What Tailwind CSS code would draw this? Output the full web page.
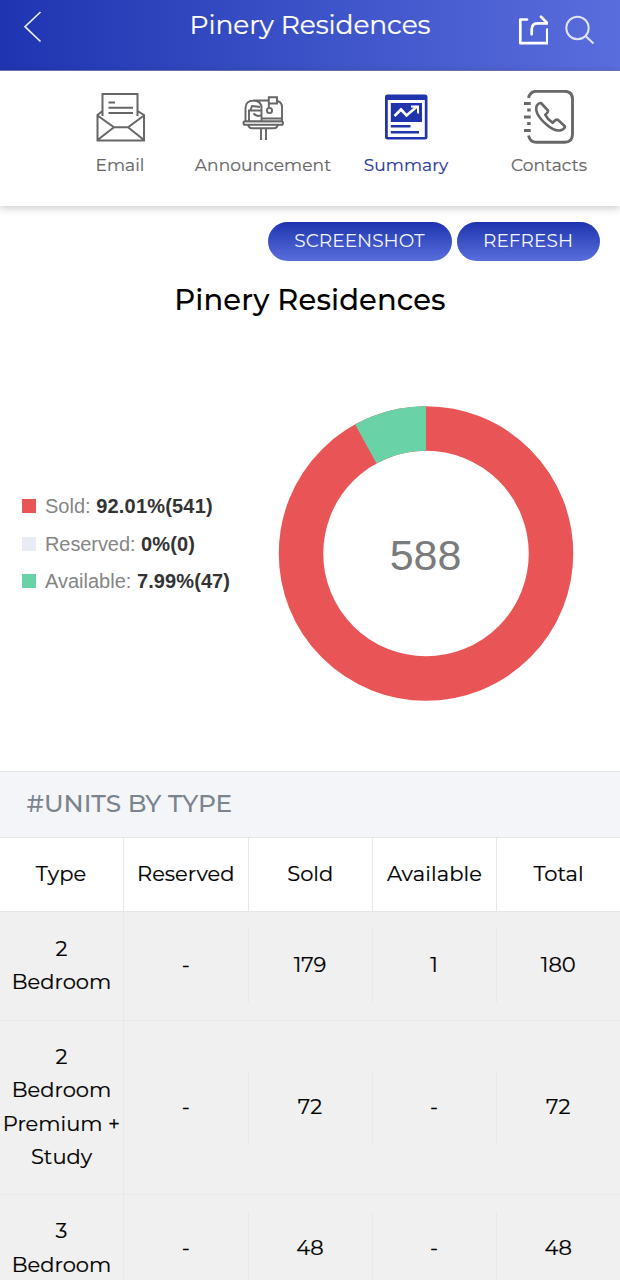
<!DOCTYPE html>
<html lang="en">
<head>
<meta charset="utf-8">
<title>Pinery Residences</title>
<script src="https://cdn.jsdelivr.net/npm/@tailwindcss/browser@4"></script>
</head>
<body class="w-[620px] h-[1280px] overflow-hidden bg-white font-[Montserrat,Inter,sans-serif] text-black">
<div class="flex flex-col h-[1280px] overflow-hidden">

  <header class="h-[71px] shrink-0 grid grid-cols-[189px_242px_189px] bg-linear-to-r from-[#1f34b1] to-[#5a6ddd] border-b border-[#7078b4] text-white">
    <div class="pl-[23px] pt-[11px]">
      <svg class="w-[20px] h-[32px]" viewBox="0 0 20 32" fill="none" stroke="#e9ecff" stroke-width="1.7"><path d="M17.5 1 2 15.7 17.5 30.5"/></svg>
    </div>
    <h1 class="pt-[5px] text-[26.500px] leading-[40px] text-center whitespace-nowrap tracking-[-0.1px] [-webkit-text-stroke:0.2px]">Pinery Residences</h1>
    <div class="flex pt-[14px] pl-[85px] gap-[16px]">
      <svg class="w-[32px] h-[32px]" viewBox="0 0 32 32" fill="none" stroke="#fff" stroke-width="2.7" stroke-linejoin="round" stroke-linecap="round"><path d="M11 5.500H4.300v23.700h27V15.500"/><path d="M16.200 20.500V16Q16.200 9.500 22 9.500H32M25.500 3l6.500 6.500" transform="translate(-.5 -.2)"/></svg>
      <svg class="w-[32px] h-[32px]" viewBox="0 0 32 32" fill="none" stroke="#dfe3fb" stroke-width="2"><circle cx="13.500" cy="14" r="11.200"/><path d="m21.500 22 8 7.500"/></svg>
    </div>
  </header>

  <nav class="relative z-10 h-[135px] shrink-0 pl-[48px] grid grid-cols-4 bg-white shadow-[0_2px_8px_rgba(0,0,0,0.22)] text-[17px] leading-[22px] text-[#666] text-center tracking-[0.1px]">
    <div class="flex flex-col items-center pt-[19px] gap-[8px]">
      <svg class="w-[56px] h-[56px]" viewBox="0 0 56 56" fill="none" stroke="#666" stroke-width="2"><path d="M10.500 26V4h35v22M16.500 12.500H23M16.500 17.800H41M16.500 23H41M10.500 21l-5 4v25.500H52V25L45.500 21M5.500 25.500 22 37.200h14L52 25.500M5.500 50 22 37.200M52 50 36 37.200"/></svg>
      <span class="translate-x-[0.500px] -translate-y-[0.500px] [-webkit-text-stroke:0.2px]">Email</span>
    </div>
    <div class="flex flex-col items-center pt-[19px] gap-[8px]">
      <svg class="w-[56px] h-[56px]" viewBox="0 0 56 56" fill="none" stroke="#666" stroke-width="1.900"><path d="M10.500 31.500V18q0-7 8-7.500 8 .5 8 7.500v13.500M18 10.500h16M42.500 11q4.500 1 4.500 6.500v14M14 31V20.500h12.500M15.500 20l1.500-4 8 1M18.500 23.500q4 4 8 1.500M33.800 17.500V7.300H42v6.200h-8.200M26.500 28.500h20"/><circle cx="34.500" cy="20.500" r="2.600"/><rect x="8.500" y="31.300" width="39.500" height="3.600" rx="1.600" fill="#ddd"/><path d="M13 35q1.500 3.300 4 3.300h22q2.500 0 4-3.300M26 38.500v11.500M31 38.500v11.500"/></svg>
      <span class="whitespace-nowrap translate-x-[0.500px] -translate-y-[0.500px] [-webkit-text-stroke:0.2px]">Announcement</span>
    </div>
    <div class="flex flex-col items-center pt-[19px] gap-[8px] text-[#2a399f]">
      <svg class="w-[56px] h-[56px]" viewBox="0 0 56 56" fill="none"><rect x="7" y="4.500" width="42.500" height="45" rx="2.500" fill="#2034ab"/><path fill="#fff" d="M9.800 10h37v37h-37z"/><path fill="#2034ab" d="M12.800 13H44v19H12.800zM12.800 35h19.700v2.600H12.800zM12.800 41H41v2.600H12.800z"/><path d="m16.500 26 6.500-6.500 5.500 6L39 16.500" stroke="#fff" stroke-width="2.600"/><path fill="#fff" d="M33 15.500h8V24l-2-1v-5l-6-.500z"/></svg>
      <span class="translate-x-[0.500px] -translate-y-[0.500px] [-webkit-text-stroke:0.2px]">Summary</span>
    </div>
    <div class="flex flex-col items-center pt-[19px] gap-[8px]">
      <svg class="w-[56px] h-[56px] -translate-x-[0.500px]" viewBox="0 0 56 56" fill="none" stroke="#686868" stroke-width="2.600"><path d="M8 8Q9.500 1.300 16 1.300h28q8 0 8 8v35q0 8-8 8H16Q9.500 52.300 8 45.500M3.500 13.500h6.700M6.700 20h3.500M3.500 27h6.700M6.700 33.500h3.500M3.500 40.500h6.700" stroke-width="2.900"/><path stroke-linejoin="round" d="M16.300 15.500q2-2.800 4.200-2.500l7 7.500q.5 1.600-2.700 4.300 2.500 5 7.500 8 3-4 5-3l7 6.500q.300 2-2.500 3.500-7 2.800-15.500-5-13-11-10-19.300z"/></svg>
      <span class="translate-x-[0.500px] -translate-y-[0.500px] [-webkit-text-stroke:0.2px]">Contacts</span>
    </div>
  </nav>

  <main class="flex flex-col h-[565px] shrink-0">
    <div class="flex justify-end gap-[5px] pt-[16px] pr-[20.500px] text-[18.500px] text-[#f3f5ff] tracking-[0.05px]">
      <button class="w-[184px] h-[39px] pb-px rounded-full bg-linear-to-b from-[#1e32ae] to-[#5a6edc]">SCREENSHOT</button>
      <button class="w-[143px] h-[39px] pb-px rounded-full bg-linear-to-b from-[#1e32ae] to-[#5a6edc]">REFRESH</button>
    </div>
    <h2 class="mt-[19px] text-[29px] leading-[40px] font-medium text-center tracking-[0.1px]">Pinery Residences</h2>
    <div class="mt-[86px] flex font-['Liberation_Sans',sans-serif]">
      <ul class="w-[278px] pl-[22px] pt-[82px] text-[20px] leading-[37.500px] text-[#858585] whitespace-nowrap">
        <li class="flex items-center gap-[9px]"><i class="size-[14px] bg-[#e95556] -mt-px"></i><span>Sold: <b class="text-[#333] tracking-[0.200px]">92.01%(541)</b></span></li>
        <li class="flex items-center gap-[9px]"><i class="size-[14px] bg-[#e9ecf6] -mt-px"></i><span class="tracking-[-0.080px]">Reserved: <b class="text-[#333] tracking-[0.150px]">0%(0)</b></span></li>
        <li class="flex items-center gap-[9px]"><i class="size-[14px] bg-[#69d2a7] -mt-px"></i><span>Available: <b class="text-[#333] tracking-[0.100px]">7.99%(47)</b></span></li>
      </ul>
      <svg class="w-[296px] h-[296px]" viewBox="0 0 296 296">
        <circle cx="148" cy="147.500" r="125" fill="none" stroke="#e95556" stroke-width="44.500"/>
        <circle cx="148" cy="147.500" r="125" fill="none" stroke="#69d2a7" stroke-width="44.500" pathLength="100" stroke-dasharray="7.990 92.010" transform="rotate(-118.760 148 147.500)"/>
        <text x="147.500" y="164" font-size="43" fill="#7b7b7b" text-anchor="middle">588</text>
      </svg>
    </div>
  </main>

  <section class="shrink-0 text-[21px] [-webkit-text-stroke:0.2px]">
    <h3 class="h-[67px] pl-[26.500px] border-y border-[#e5e6e8] bg-[#f3f5f9] text-[24.800px] leading-[63px] text-[#7b838c] font-medium [-webkit-text-stroke:0px]">#UNITS BY TYPE</h3>
    <div class="h-[74px] grid grid-cols-[124px_124.500px_124.500px_124px_123px] border-b border-[#e6e6e6] text-center leading-[72px]">
      <div class="border-r border-[#e8e8e8] pr-px">Type</div>
      <div class="border-r border-[#e8e8e8]">Reserved</div>
      <div class="border-r border-[#e8e8e8]">Sold</div>
      <div class="border-r border-[#e8e8e8] tracking-[0.1px]">Available</div>
      <div>Total</div>
    </div>
    <div class="h-[109px] grid grid-cols-[124px_124.500px_124px_124px_123.500px] items-center bg-[#f0f0f0] border-b border-[#e8e9ea] text-center">
      <div class="h-full flex flex-col justify-center border-r border-[#e8e9ea] leading-[33.300px] pb-[2px]"><span>2</span><span>Bedroom</span></div>
      <div class="h-[74px] leading-[71px] border-r border-[#e8e9ec]">-</div>
      <div class="h-[74px] leading-[71px] border-r border-[#e8e9ec]">179</div>
      <div class="h-[74px] leading-[71px] border-r border-[#e8e9ec]">1</div>
      <div class="h-[74px] leading-[71px]">180</div>
    </div>
    <div class="h-[174px] grid grid-cols-[124px_124.500px_124px_124px_123.500px] items-center bg-[#f0f0f0] border-b border-[#e8e9ea] text-center">
      <div class="h-full flex flex-col justify-center border-r border-[#e8e9ea] leading-[33.300px] pb-[2px] whitespace-nowrap"><span>2</span><span>Bedroom</span><span>Premium +</span><span>Study</span></div>
      <div class="h-[74px] leading-[71px] border-r border-[#e8e9ec]">-</div>
      <div class="h-[74px] leading-[71px] border-r border-[#e8e9ec]">72</div>
      <div class="h-[74px] leading-[71px] border-r border-[#e8e9ec]">-</div>
      <div class="h-[74px] leading-[71px]">72</div>
    </div>
    <div class="h-[107px] grid grid-cols-[124px_124.500px_124px_124px_123.500px] items-center bg-[#f0f0f0] text-center">
      <div class="h-full flex flex-col justify-center border-r border-[#e8e9ea] leading-[33.300px] pb-[2px]"><span>3</span><span>Bedroom</span></div>
      <div class="h-[74px] leading-[71px] border-r border-[#e8e9ec]">-</div>
      <div class="h-[74px] leading-[71px] border-r border-[#e8e9ec]">48</div>
      <div class="h-[74px] leading-[71px] border-r border-[#e8e9ec]">-</div>
      <div class="h-[74px] leading-[71px]">48</div>
    </div>
  </section>
</div>
</body>
</html>
